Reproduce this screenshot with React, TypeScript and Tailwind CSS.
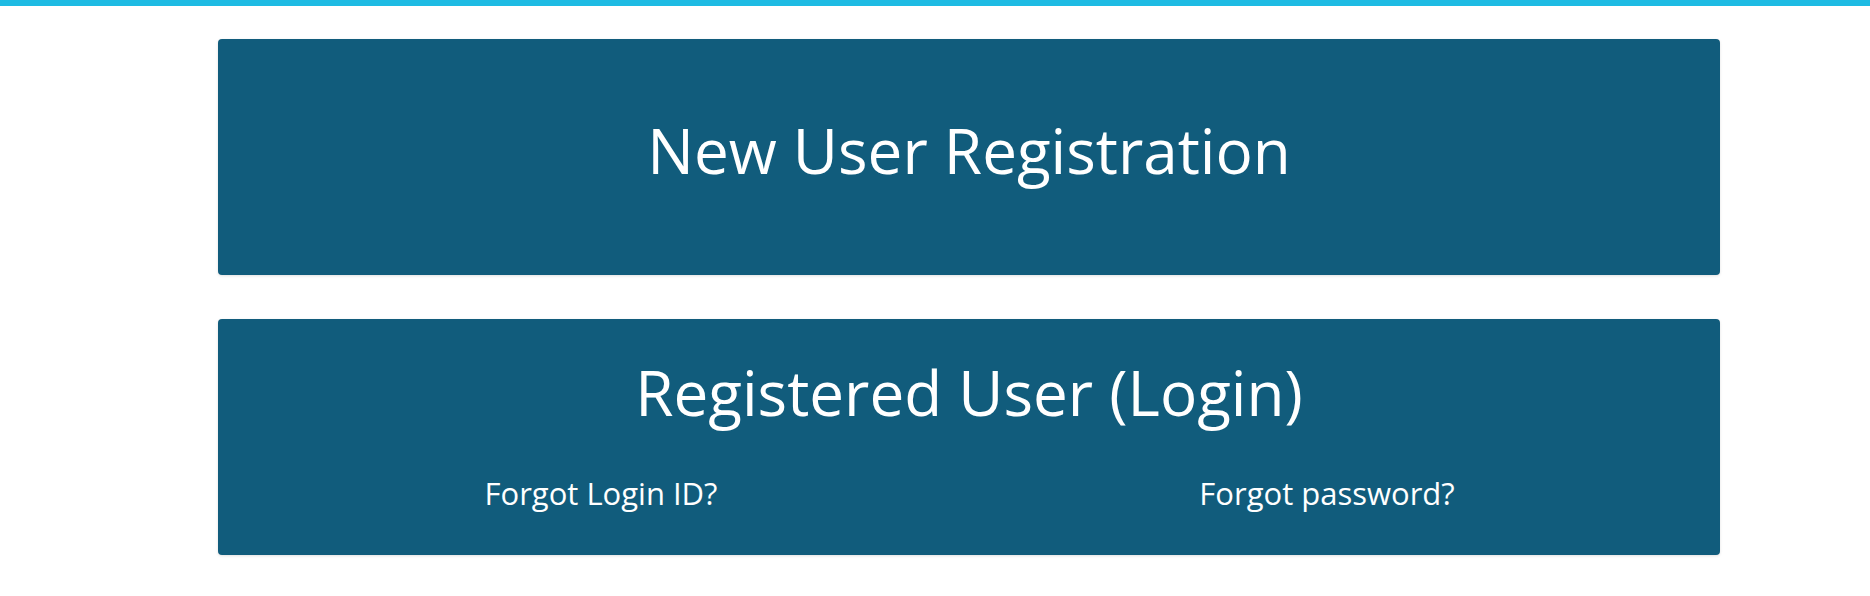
import React from "react";

export default function App() {
  return (
    <div className="min-h-[596px] bg-white" style={{ fontFamily: '"Open Sans", "Noto Sans", sans-serif' }}>
      <div className="h-[6px] bg-[#1ebbe3]" />
      <div className="ml-[218px] w-[1502px] pt-[33px] flex flex-col gap-[44px]">
        <div className="h-[236px] rounded-[4px] bg-[#115c7c] shadow-[0_1px_3px_rgba(0,0,0,0.12)] flex items-center justify-center pb-[14px]">
          <span className="text-white text-[62px] leading-none">New User Registration</span>
        </div>
        <div className="h-[236px] rounded-[4px] bg-[#115c7c] shadow-[0_1px_3px_rgba(0,0,0,0.12)] flex flex-col items-center pt-[42px]">
          <span className="text-white text-[62px] leading-none">Registered User (Login)</span>
          <div className="mt-[55px] flex w-full text-white text-[31px] leading-none">
            <span className="w-[766px] text-center">Forgot Login ID?</span>
            <span className="w-[686px] text-center">Forgot password?</span>
          </div>
        </div>
      </div>
    </div>
  );
}
